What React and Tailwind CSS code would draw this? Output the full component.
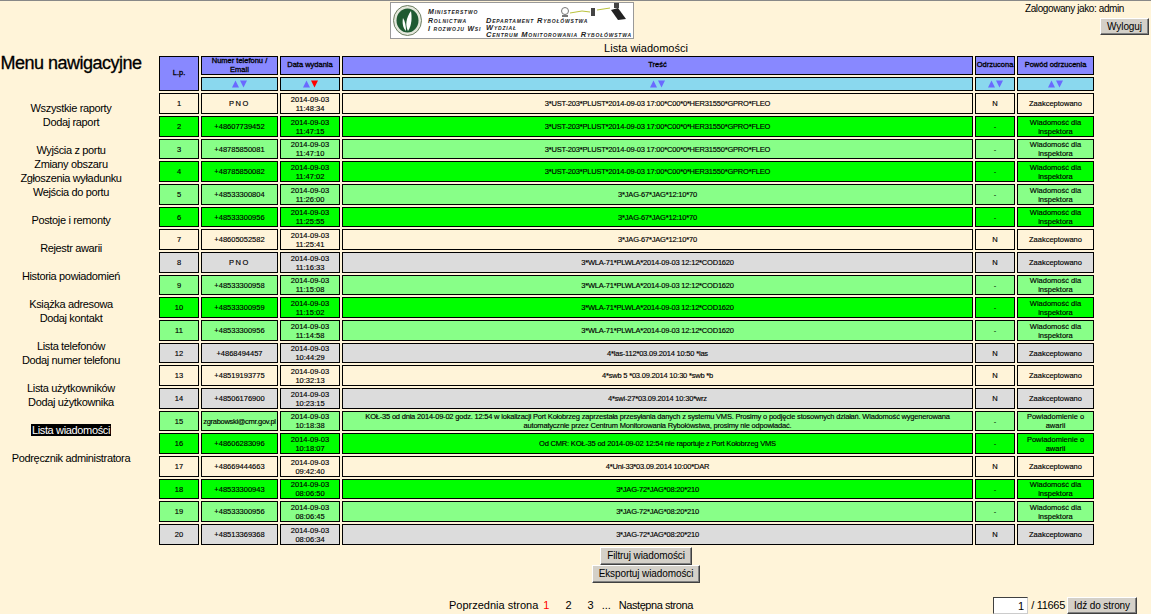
const F = { fontFamily: '"Liberation Sans", Arial, sans-serif' };

const C = {
  c: 'bg-[#fff4d9]',
  g: 'bg-[#00ff00]',
  l: 'bg-[#88ff88]',
  s: 'bg-[#dcdcdc]',
};
const H = ['h-[21px]', 'h-[21px]', 'h-[20px]'];
const A = '3*UST-203*PLUST*2014-09-03 17:00*C00*0*HER31550*GPRO*FLEO';
const B = '3*JAG-67*JAG*12:10*70';
const D = '3*WLA-71*PLWLA*2014-09-03 12:12*COD1620';
const E = '3*JAG-72*JAG*08:20*210';
const rows = [
  ['c', 'PNO', '11:48:34', A],
  ['g', '+48607739452', '11:47:15', A],
  ['l', '+48785850081', '11:47:10', A],
  ['g', '+48785850082', '11:47:02', A],
  ['l', '+48533300804', '11:26:00', B],
  ['g', '+48533300956', '11:25:55', B],
  ['c', '+48605052582', '11:25:41', B],
  ['s', 'PNO', '11:16:33', D],
  ['l', '+48533300958', '11:15:08', D],
  ['g', '+48533300959', '11:15:02', D],
  ['l', '+48533300956', '11:14:58', D],
  ['s', '+4868494457', '10:44:29', '4*las-112*03.09.2014 10:50 *las'],
  ['c', '+48519193775', '10:32:13', '4*swb 5 *03.09.2014 10:30 *swb *b'],
  ['s', '+48506176900', '10:23:15', '4*swi-27*03.09.2014 10:30*wrz'],
  ['l', 'zgrabowski@cmr.gov.pl', '10:18:38', 'KOŁ-35 od dnia 2014-09-02 godz. 12:54 w lokalizacji Port Kołobrzeg zaprzestała przesyłania danych z systemu VMS. Prosimy o podjęcie stosownych działań. Wiadomość wygenerowana automatycznie przez Centrum Monitorowania Rybołówstwa, prosimy nie odpowiadać.', 'Powiadomienie o awarii'],
  ['g', '+48606283096', '10:18:07', 'Od CMR: KOŁ-35 od 2014-09-02 12:54 nie raportuje z Port Kołobrzeg VMS', 'Powiadomienie o awarii'],
  ['c', '+48669444663', '09:42:40', '4*Uni-33*03.09.2014 10:00*DAR'],
  ['g', '+48533300943', '08:06:50', E],
  ['l', '+48533300956', '08:06:45', E],
  ['s', '+48513369368', '08:06:34', E],
];

const menu = [
  ['Wszystkie raporty', 'Dodaj raport'],
  ['Wyjścia z portu', 'Zmiany obszaru', 'Zgłoszenia wyładunku', 'Wejścia do portu'],
  ['Postoje i remonty'],
  ['Rejestr awarii'],
  ['Historia powiadomień'],
  ['Książka adresowa', 'Dodaj kontakt'],
  ['Lista telefonów', 'Dodaj numer telefonu'],
  ['Lista użytkowników', 'Dodaj użytkownika'],
  ['Lista wiadomości'],
  ['Podręcznik administratora'],
];

function Arrows({ red }) {
  return (
    <svg width="15" height="8" viewBox="0 0 15 8" className="block mx-auto">
      <polygon points="0,7.5 3.5,0.5 7,7.5" fill="#6a6aff" />
      <polygon points="8,0.5 15,0.5 11.5,7.5" fill={red ? '#ff0000' : '#6a6aff'} />
    </svg>
  );
}

function Btn({ children, className = '' }) {
  return (
    <button
      className={`bg-[#d4d0c8] border border-t-white border-l-white border-r-[#404040] border-b-[#404040] text-[10px] leading-none tracking-[-0.1px] text-black shadow-[inset_-1px_-1px_0_#808080] ${className}`}
      style={F}
    >
      {children}
    </button>
  );
}

function Logo() {
  return (
    <div className="w-[244px] h-[37px] mt-px bg-white border border-[#999] flex items-start overflow-hidden text-[#222]">
      <svg width="29" height="31" viewBox="0 0 29 31" className="ml-[2px] mt-[2px] shrink-0">
        <ellipse cx="14.5" cy="15.5" rx="14" ry="15" fill="#e4e8dc" stroke="#6c7c60" />
        <ellipse cx="14.5" cy="15.5" rx="11" ry="12" fill="#1f5a32" />
        <path d="M15 26 C12 20 13 13 18 6 C19 12 19 20 15 26Z" fill="#fff" />
        <path d="M13 26 C10 23 9 18 10 13 C12 16 13 21 13 26Z" fill="#fff" />
      </svg>
      <div className="w-[58px] ml-[6px] shrink-0 mt-[5px] font-bold italic text-[7px] leading-[8.5px] tracking-[0.8px] [font-variant:small-caps] whitespace-nowrap">
        <div>Ministerstwo</div>
        <div>Rolnictwa</div>
        <div>I rozwoju Wsi</div>
      </div>
      <div className="relative h-full flex-1">
        <svg width="72" height="19" viewBox="0 0 72 19" className="absolute left-[72px] top-0">
          <circle cx="7" cy="8" r="3.5" fill="#fff" stroke="#777" />
          <path d="M4 12h6v2H4z" fill="#777" />
          <path d="M12 10 L24 8 L32 9" stroke="#b9c23c" strokeWidth="1" fill="none" />
          <rect x="33" y="5" width="4" height="8" fill="#444" />
          <path d="M39 7 L52 5" stroke="#b9c23c" strokeWidth="1" fill="none" />
          <path d="M53 7 L60 5 L68 16 L60 17Z" fill="#222" />
          <rect x="56" y="0" width="5" height="5" fill="#444" />
        </svg>
        <div className="pt-[14px] font-bold italic text-[7.5px] leading-[7px] tracking-[0.8px] [font-variant:small-caps] whitespace-nowrap">
          <div>Departament Rybołówstwa</div>
          <div>Wydział</div>
          <div>Centrum Monitorowania Rybołówstwa</div>
        </div>
      </div>
    </div>
  );
}

const th = 'border border-black bg-[#8888ff] text-[7.5px] leading-[8.5px] font-normal text-center p-0 [-webkit-text-stroke:0.3px_black]';
const ar = 'border border-black bg-[#8ad8ee] h-[14px] p-0 align-middle';
const td = 'border border-black text-[7.5px] leading-[9px] text-center p-0 font-normal [-webkit-text-stroke:0.15px_black]';

export default function App() {
  return (
    <div className="w-[1151px] h-[614px] overflow-hidden bg-[#fff4d9] text-black flex flex-col border-t border-[#888]" style={F}>
      <header className="h-[41px] shrink-0 flex items-start pl-[390px]">
        <Logo />
        <div className="ml-auto mr-[2px] flex flex-col items-end">
          <div className="text-[10px] tracking-[-0.4px] leading-[13px] mt-px mr-[25px] whitespace-nowrap">Zalogowany jako: admin</div>
          <Btn className="w-[49px] h-[17px] mt-[3px]">Wyloguj</Btn>
        </div>
      </header>
      <div className="flex flex-1 min-h-0">
        <aside className="w-[157px] shrink-0">
          <div className="w-[142px] text-center">
            <h1 className="mt-[11px] h-[20px] text-[18px] tracking-[-0.5px] leading-[20px] font-normal whitespace-nowrap [-webkit-text-stroke:0.3px_black]">Menu nawigacyjne</h1>
            <nav className="mt-[28px] flex flex-col gap-[14px] text-[11px] tracking-[-0.35px] leading-[14px]">
              {menu.map((g, i) => (
                <div key={i}>
                  {g.map((t) => (
                    <div key={t} className="whitespace-nowrap">
                      {t === 'Lista wiadomości' ? <span className="bg-black text-white px-px">{t}</span> : t}
                    </div>
                  ))}
                </div>
              ))}
            </nav>
          </div>
        </aside>
        <main className="flex-1 min-w-0 flex flex-col">
          <h2 className="text-[11px] leading-[13px] font-normal text-center pr-[16px] h-[13px]">Lista wiadomości</h2>
          <table className="border-separate border-spacing-0.5 table-fixed w-[939px] -mt-px">
            <colgroup>
              <col className="w-[40px]" />
              <col className="w-[77px]" />
              <col className="w-[60px]" />
              <col />
              <col className="w-[40px]" />
              <col className="w-[77px]" />
            </colgroup>
            <thead>
              <tr className="h-[19px]">
                <th rowSpan={2} className={th}>L.p.</th>
                <th className={th}>Numer telefonu / Email</th>
                <th className={th}>Data wydania</th>
                <th className={th}>Treść</th>
                <th className={th}>Odrzucona</th>
                <th className={th}>Powód odrzucenia</th>
              </tr>
              <tr>
                <td className={ar}><Arrows /></td>
                <td className={ar}><Arrows red /></td>
                <td className={ar}><Arrows /></td>
                <td className={ar}><Arrows /></td>
                <td className={ar}><Arrows /></td>
              </tr>
            </thead>
            <tbody>
              {rows.map(([c, phone, time, text, reason], i) => {
                const green = c === 'g' || c === 'l';
                const cell = `${td} ${C[c]}`;
                return (
                  <tr key={i} className={H[i % 3]}>
                    <td className={`${cell} font-bold`}>{i + 1}</td>
                    <td className={`${cell} ${phone === 'PNO' ? 'tracking-[1.5px]' : phone.includes('@') ? 'tracking-[-0.3px]' : ''} whitespace-nowrap`}>{phone}</td>
                    <td className={cell}>2014-09-03<br />{time}</td>
                    <td className={`${cell} px-1 tracking-[-0.2px]`}>{text}</td>
                    <td className={`${cell} font-bold`}>{green ? '-' : 'N'}</td>
                    <td className={cell}>{green ? (reason || 'Wiadomość dla inspektora') : 'Zaakceptowano'}</td>
                  </tr>
                );
              })}
            </tbody>
          </table>
          <div className="flex flex-col items-center pr-[16px]">
            <Btn className="w-[92px] h-[18px]">Filtruj wiadomości</Btn>
            <Btn className="w-[108px] h-[18px]">Eksportuj wiadomości</Btn>
          </div>
          <div className="flex items-center mt-[14px] h-[17px] text-[11px] pl-[292px] pr-[14px] whitespace-nowrap">
            <span>Poprzednia strona</span>
            <span className="ml-[5px] text-[#ff0000]">1</span>
            <span className="ml-[16px]">2</span>
            <span className="ml-[16px]">3</span>
            <span className="ml-[8px]">...</span>
            <span className="ml-[8px] tracking-[-0.45px]">Następna strona</span>
            <input
              readOnly
              value="1"
              className="ml-auto w-[35px] h-[17px] bg-white border border-t-[#404040] border-l-[#404040] border-r-[#ccc] border-b-[#ccc] text-right pr-[3px] text-[11px]"
              style={F}
            />
            <span className="ml-[3px] tracking-[-0.3px]">/ 11665</span>
            <Btn className="ml-[2px] w-[70px] h-[17px]">Idź do strony</Btn>
          </div>
        </main>
      </div>
    </div>
  );
}
